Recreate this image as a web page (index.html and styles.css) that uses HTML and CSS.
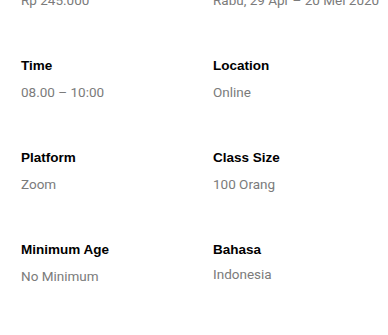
FILE: index.html
```html
<!DOCTYPE html>
<html>
<head>
<meta charset="utf-8">
<link rel="stylesheet" href="styles.css">
</head>
<body>
<div class="details">
  <div class="item top"><div class="value">Rp 245.000</div></div>
  <div class="item top"><div class="value">Rabu, 29 Apr – 20 Mei 2020</div></div>

  <div class="item"><div class="label">Time</div><div class="value">08.00 – 10:00</div></div>
  <div class="item"><div class="label">Location</div><div class="value">Online</div></div>

  <div class="item"><div class="label">Platform</div><div class="value">Zoom</div></div>
  <div class="item"><div class="label">Class Size</div><div class="value">100 Orang</div></div>

  <div class="item"><div class="label">Minimum Age</div><div class="value">No Minimum</div></div>
  <div class="item"><div class="label">Bahasa</div><div class="value value-tight">Indonesia</div></div>
</div>
</body>
</html>
```
FILE: styles.css
```css
html, body {
  margin: 0;
  padding: 0;
  background: #ffffff;
}
.details {
  display: grid;
  grid-template-columns: 192px 1fr;
  row-gap: 48px;
  padding-left: 21px;
  margin-top: -10px;
}
.label {
  font-family: "Liberation Sans", Arial, sans-serif;
  font-weight: bold;
  font-size: 13.5px;
  line-height: 16px;
  color: #000000;
  margin-bottom: 8px;
}
.value {
  font-family: Roboto, "Noto Sans", sans-serif;
  font-size: 13.5px;
  line-height: 20px;
  color: #7b7b7b;
  white-space: nowrap;
}
.value-tight {
  margin-top: -2px;
}
```
